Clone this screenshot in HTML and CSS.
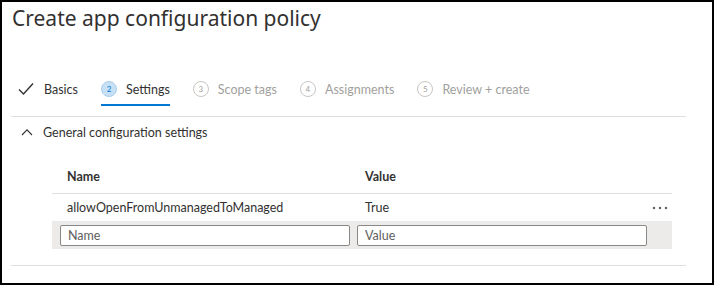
FILE: index.html
```html
<!DOCTYPE html>
<html lang="en">
<head>
  <meta charset="UTF-8">
  <title>Create app configuration policy</title>
  <link rel="stylesheet" href="styles.css">
</head>
<body>
  <div class="frame">
    <h1>Create app configuration policy</h1>

    <nav class="steps">
      <div class="step done">
        <svg class="check" width="16" height="14" viewBox="0 0 16 14">
          <path d="M1 7.5 L5.5 12 L15 1.5" fill="none" stroke="#323130" stroke-width="1.4"/>
        </svg>
        <span>Basics</span>
      </div>
      <div class="step active">
        <span class="num">2</span>
        <span>Settings</span>
      </div>
      <div class="step">
        <span class="num">3</span>
        <span>Scope tags</span>
      </div>
      <div class="step">
        <span class="num">4</span>
        <span>Assignments</span>
      </div>
      <div class="step">
        <span class="num">5</span>
        <span>Review + create</span>
      </div>
    </nav>

    <section class="group">
      <div class="group-head">
        <svg width="12" height="8" viewBox="0 0 12 8">
          <path d="M1 7 L6 1.8 L11 7" fill="none" stroke="#323130" stroke-width="1.1"/>
        </svg>
        <span>General configuration settings</span>
      </div>

      <div class="table">
        <div class="row head">
          <div class="cell">Name</div>
          <div class="cell">Value</div>
          <div class="cell"></div>
        </div>
        <div class="row">
          <div class="cell">allowOpenFromUnmanagedToManaged</div>
          <div class="cell">True</div>
          <div class="cell more">
            <svg width="16" height="4" viewBox="0 0 16 4">
              <circle cx="2" cy="2" r="1.2" fill="#605e5c"/>
              <circle cx="8" cy="2" r="1.2" fill="#605e5c"/>
              <circle cx="14" cy="2" r="1.2" fill="#605e5c"/>
            </svg>
          </div>
        </div>
        <div class="row edit">
          <input type="text" placeholder="Name">
          <input type="text" placeholder="Value">
        </div>
      </div>
    </section>
  </div>
</body>
</html>
```

FILE: styles.css
```css
:root {
  --text: #323130;
  --muted: #a19f9d;
  --line: #e1dfdd;
  --accent: #0078d4;
}

body {
  margin: 0;
  font-family: Lato, Roboto, sans-serif;
  font-size: 12.5px;
  color: var(--text);
}

.frame {
  box-sizing: border-box;
  width: 714px;
  height: 285px;
  border: 2px solid #000;
}

h1 {
  margin: 2px 0 0 10px;
  font-family: 'Noto Sans', sans-serif;
  font-size: 21px;
  font-weight: 400;
  line-height: 28px;
}

.steps {
  display: flex;
  gap: 23px;
  margin: 42px 26px 0 9px;
  padding: 0 0 10px 7px;
  border-bottom: 1px solid var(--line);
}

.step {
  display: flex;
  align-items: center;
  gap: 9px;
  height: 30px;
  color: var(--muted);
  border-bottom: 2px solid transparent;
}

.step.done,
.step.active {
  color: var(--text);
}

.step.active {
  border-bottom-color: var(--accent);
}

.check {
  margin-right: 1px;
}

.num {
  box-sizing: border-box;
  width: 16px;
  height: 16px;
  border: 1px solid #c8c6c4;
  border-radius: 50%;
  font-size: 8px;
  line-height: 14px;
  text-align: center;
  color: var(--muted);
}

.active .num {
  background: #c7e0f4;
  border-color: #a9cdef;
  color: var(--accent);
}

.group {
  margin: 0 26px 0 9px;
  border-bottom: 1px solid var(--line);
}

.group-head {
  display: flex;
  align-items: center;
  gap: 10px;
  margin: 7px 0 0 10px;
  height: 16px;
}

.table {
  margin: 20px 0 0 41px;
  width: 620px;
}

.row {
  display: grid;
  grid-template-columns: 298px 1fr 40px;
  align-items: center;
  height: 27px;
}

.row.head {
  height: 33px;
  border-bottom: 1px solid var(--line);
  font-weight: 700;
}

.row .cell {
  padding-left: 15px;
}

.row .more {
  display: flex;
  padding-left: 20px;
}

.row.edit {
  display: flex;
  gap: 7px;
  height: 28px;
  padding-left: 8px;
  background: #edebe9;
  margin-bottom: 16px;
}

.edit input {
  box-sizing: border-box;
  width: 290px;
  height: 21px;
  border: 1px solid #8a8886;
  border-radius: 2px;
  padding: 0 7px;
  font-family: inherit;
  font-size: 12.5px;
  color: var(--text);
}

.edit input::placeholder {
  color: #605e5c;
}
```
